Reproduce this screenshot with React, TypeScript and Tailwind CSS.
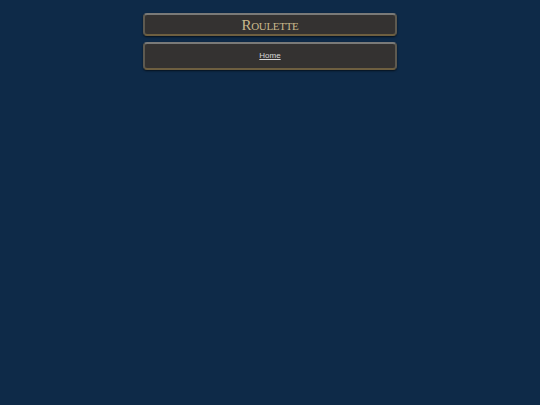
export default function App() {
  return (
    <div className="min-h-[405px] bg-[#0e2a48] pt-[13px]">
      <div className="mx-auto flex w-[254px] flex-col gap-[6px]">
        <header className="flex h-[23px] items-center justify-center rounded-[4px] border-2 border-t-[#7a7a78] border-x-[#5e5a50] border-b-[#6e5f40] bg-[#343231] shadow-[0_1px_2px_rgba(0,0,0,0.6)]">
          <h1
            className="pt-[1px] text-[15px] leading-none tracking-[-0.3px] text-[#c9b98c]"
            style={{ fontFamily: '"Liberation Serif", serif', fontVariant: "small-caps" }}
          >
            Roulette
          </h1>
        </header>
        <nav className="flex h-[28px] items-center justify-center rounded-[4px] border-2 border-t-[#7a7a78] border-x-[#5e5a50] border-b-[#6e5f40] bg-[#343231] shadow-[0_1px_2px_rgba(0,0,0,0.6)]">
          <a
            href="#"
            className="text-[8px] text-[#d8d8d8] underline"
            style={{ fontFamily: '"Liberation Sans", Arial, sans-serif' }}
          >
            Home
          </a>
        </nav>
      </div>
    </div>
  );
}
